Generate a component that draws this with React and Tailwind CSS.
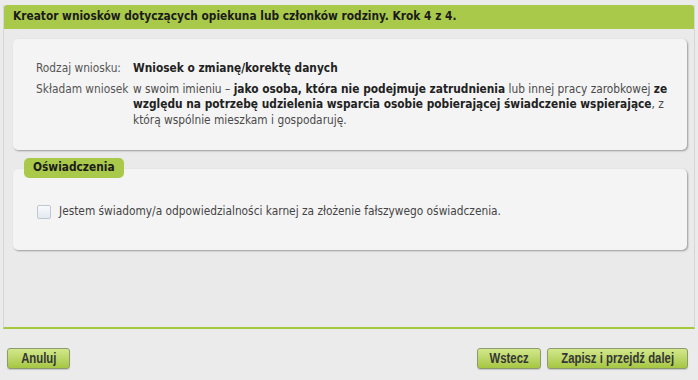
const font = "font-['DejaVu_Sans_Condensed','DejaVu_Sans',sans-serif]";
const btnFont = "font-['Liberation_Sans','Arial',sans-serif]";

const Button = ({ label, className = "" }) => (
  <button
    type="button"
    className={`flex h-[21px] items-center justify-center rounded-[3px] border border-[#8c9a72] bg-gradient-to-b from-[#d3e88a] to-[#a5c641] text-[14px] font-bold text-[#363636] shadow-[0_1px_1px_rgba(0,0,0,0.15)] ${btnFont} ${className}`}
  >
    <span className="inline-block scale-x-[0.81] whitespace-nowrap">{label}</span>
  </button>
);

const App = () => {
  return (
    <div className={`flex h-[380px] w-[698px] flex-col bg-[#ebebeb] px-[3px] pt-[5px] ${font}`}>
      <div className="flex h-[324px] flex-col border-x border-b-2 border-x-[#d6d6d6] border-b-[#a6c83f] bg-[#eaeaea]">
        <div className="flex h-[24px] items-center rounded-t-[3px] bg-[#a9c94a] px-[9px] text-[11.8px] font-bold text-[#1b1b1b]">
          Kreator wniosków dotyczących opiekuna lub członków rodziny. Krok 4 z 4.
        </div>

        <div className="flex flex-col pl-[9px] pr-[7px] pt-[10px]">
          <div className="h-[111px] rounded-[5px] bg-[#f4f4f4] pl-[23px] pr-[10px] pt-[22px] text-[11.8px] leading-[15.5px] text-[#4a4a4a] shadow-[1px_1px_2px_rgba(0,0,0,0.35)]">
            <div className="flex">
              <div className="w-[97px] shrink-0 text-[#555]">Rodzaj wniosku:</div>
              <div className="font-bold text-[#222]">Wniosek o zmianę/korektę danych</div>
            </div>
            <div className="mt-[5px] flex">
              <div className="w-[97px] shrink-0 text-[#555]">Składam wniosek</div>
              <div className="w-[535px]">
                w swoim imieniu – <b className="text-[#222]">jako osoba, która nie podejmuje zatrudnienia</b> lub
                innej pracy zarobkowej{" "}
                <b className="text-[#222]">
                  ze względu na potrzebę udzielenia wsparcia osobie pobierającej świadczenie wspierające
                </b>
                , z którą wspólnie mieszkam i gospodaruję.
              </div>
            </div>
          </div>

          <div className="relative mt-[19px] h-[81px] rounded-[5px] bg-[#f4f4f4] shadow-[1px_1px_2px_rgba(0,0,0,0.35)]">
            <div className="absolute left-[11px] top-[-11px] flex h-[20px] items-center rounded-[5px] bg-[#a9c94a] px-[9px] text-[11.8px] font-bold text-[#1b1b1b]">
              Oświadczenia
            </div>
            <label className="flex items-center gap-[8px] pl-[24px] pt-[34px] text-[11.8px] text-[#444]">
              <span className="h-[14px] w-[14px] rounded-[2px] border border-[#bfc6d0] bg-gradient-to-b from-[#f8fafc] to-[#e3e9f0]" />
              Jestem świadomy/a odpowiedzialności karnej za złożenie fałszywego oświadczenia.
            </label>
          </div>
        </div>
      </div>

      <div className="mt-[19px] flex items-center pl-[4px] pr-[7px]">
        <Button label="Anuluj" className="w-[63px]" />
        <div className="flex-1" />
        <Button label="Wstecz" className="w-[64px]" />
        <Button label="Zapisz i przejdź dalej" className="ml-[6px] w-[141px]" />
      </div>
    </div>
  );
};

export default App;
